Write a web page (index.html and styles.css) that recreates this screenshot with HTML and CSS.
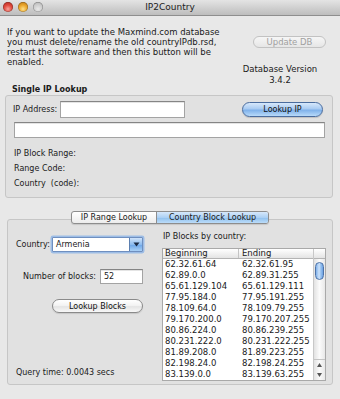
FILE: index.html
```html
<!DOCTYPE html>
<html>
<head>
<meta charset="utf-8">
<title>IP2Country</title>
<link rel="stylesheet" href="styles.css">
</head>
<body>
<div class="window">
  <div class="titlebar">
    <div class="lights"><span class="light red"></span><span class="light amber"></span><span class="light off"></span></div>
    <div class="title">IP2Country</div>
    <div></div>
  </div>

  <div class="top">
    <p class="info">If you want to update the Maxmind.com database<br>you must delete/rename the old countryIPdb.rsd,<br>restart the software and then this button will be<br>enabled.</p>
    <div class="dbcol">
      <div class="btn pill disabled updatedb">Update DB</div>
      <div class="dbver">Database Version</div>
      <div class="dbnum">3.4.2</div>
    </div>
  </div>

  <div class="group-title">Single IP Lookup</div>
  <div class="group">
    <div class="row1">
      <span class="ipl">IP Address:</span>
      <div class="field ipfield"></div>
      <div class="btn pill blue lookupip">Lookup IP</div>
    </div>
    <div class="field widefield"></div>
    <div class="infolines">
      <div>IP Block Range:</div>
      <div>Range Code:</div>
      <div>Country&nbsp; (code):</div>
    </div>
  </div>

  <div class="tabs">
    <div class="seg"><span class="segitem first">IP Range Lookup</span><span class="segitem sel">Country Block Lookup</span></div>
  </div>
  <div class="tabbox">
    <div class="leftcol">
      <div class="countryrow">
        <span class="countrylbl">Country:</span>
        <div class="popup"><span class="popval">Armenia</span><span class="poparrow"><svg width="7" height="5" viewBox="0 0 7 5"><path d="M0.5 0.5 L6.5 0.5 L3.5 4.5 Z" fill="#1b2a44"/></svg></span></div>
      </div>
      <div class="numrow">
        <span class="numlbl">Number of blocks:</span>
        <div class="field numfield">52</div>
      </div>
      <div class="btn pill white lookupblocks">Lookup Blocks</div>
      <div class="query">Query time: 0.0043 secs</div>
    </div>
    <div class="rightcol">
      <div class="caption">IP Blocks by country:</div>
      <div class="table">
        <div class="tmain">
          <div class="thead"><span class="c1">Beginning</span><span class="c2">Ending</span></div>
          <div class="trow"><span class="c1">62.32.61.64</span><span class="c2">62.32.61.95</span></div>
          <div class="trow"><span class="c1">62.89.0.0</span><span class="c2">62.89.31.255</span></div>
          <div class="trow"><span class="c1">65.61.129.104</span><span class="c2">65.61.129.111</span></div>
          <div class="trow"><span class="c1">77.95.184.0</span><span class="c2">77.95.191.255</span></div>
          <div class="trow"><span class="c1">78.109.64.0</span><span class="c2">78.109.79.255</span></div>
          <div class="trow"><span class="c1">79.170.200.0</span><span class="c2">79.170.207.255</span></div>
          <div class="trow"><span class="c1">80.86.224.0</span><span class="c2">80.86.239.255</span></div>
          <div class="trow"><span class="c1">80.231.222.0</span><span class="c2">80.231.222.255</span></div>
          <div class="trow"><span class="c1">81.89.208.0</span><span class="c2">81.89.223.255</span></div>
          <div class="trow"><span class="c1">82.198.24.0</span><span class="c2">82.198.24.255</span></div>
          <div class="trow"><span class="c1">83.139.0.0</span><span class="c2">83.139.63.255</span></div>
        </div>
        <div class="scroll">
          <div class="scorner"></div>
          <div class="strack">
            <div class="thumb"></div>
            <div class="arrows">
              <span class="arr"><svg width="5" height="4" viewBox="0 0 5 4"><path d="M2.5 0 L5 4 L0 4 Z" fill="#555"/></svg></span>
              <span class="arr"><svg width="5" height="4" viewBox="0 0 5 4"><path d="M0 0 L5 0 L2.5 4 Z" fill="#555"/></svg></span>
            </div>
          </div>
        </div>
      </div>
    </div>
  </div>
</div>
</body>
</html>
```

FILE: styles.css
```css
* { box-sizing: border-box; }

body {
  margin: 0;
  background: #e8e8e8;
  font-family: "DejaVu Sans", "Noto Sans", sans-serif;
  font-size: 8px;
  color: #1a1a1a;
}

.window {
  width: 340px;
  height: 399px;
  background: #e8e8e8;
  overflow: hidden;
}

/* title bar */
.titlebar {
  height: 16px;
  display: grid;
  grid-template-columns: 1fr auto 1fr;
  background: linear-gradient(#e4e4e4, #bdbdbd);
  border-bottom: 1px solid #8e8e8e;
}
.lights {
  display: flex;
  gap: 5px;
  padding: 2px 0 0 3px;
}
.light {
  width: 10px;
  height: 10px;
  border-radius: 50%;
  box-shadow: inset 0 0 0 0.5px rgba(0,0,0,0.35);
}
.light.red { background: radial-gradient(circle at 50% 70%, #f8a39b 0%, #e04a3d 45%, #a8221a 100%); }
.light.amber { background: radial-gradient(circle at 50% 70%, #fde08a 0%, #eba72d 45%, #b26d10 100%); }
.light.off { background: radial-gradient(circle at 50% 70%, #e8e8e8 0%, #cdcdcd 50%, #a9a9a9 100%); }
.title {
  font-size: 9px;
  line-height: 15px;
  color: #222;
}

/* top section */
.top {
  display: flex;
  padding: 11px 0 0 7px;
  font-size: 8.5px;
}
.info {
  margin: 0;
  line-height: 10px;
  white-space: nowrap;
}
.dbcol {
  margin-left: auto;
  margin-right: 14px;
  width: 92px;
  display: flex;
  flex-direction: column;
  text-align: center;
}
.dbver { margin-top: 16px; line-height: 10px; }
.dbnum { margin-top: 1px; line-height: 10px; }

/* buttons */
.btn {
  display: flex;
  align-items: center;
  justify-content: center;
  white-space: nowrap;
}
.pill { border-radius: 8px; }
.disabled {
  border: 1px solid #c2c2c2;
  background: linear-gradient(#f6f6f6, #e6e6e6);
  color: #a0a0a0;
}
.updatedb {
  align-self: flex-end;
  margin-top: 9px;
  width: 73px;
  height: 12px;
}
.blue {
  border: 1px solid #4a6c9e;
  background: linear-gradient(#d7e8fb 0%, #a9cbf2 45%, #7fb1ea 55%, #b8daf9 100%);
  color: #111;
  box-shadow: 0 1px 1px rgba(0,0,0,0.15);
}
.white {
  border: 1px solid #8a8a8a;
  background: linear-gradient(#ffffff 0%, #f3f3f3 45%, #e4e4e4 55%, #f8f8f8 100%);
  color: #111;
  box-shadow: 0 1px 1px rgba(0,0,0,0.12);
}

/* fields */
.field {
  background: #fff;
  border: 1px solid #a3a3a3;
  border-top-color: #858585;
  box-shadow: inset 0 1px 0 #e4e4e4;
}

/* group box */
.group-title {
  padding-left: 12px;
  line-height: 10px;
  font-weight: bold;
}
.group {
  margin: 0 7px 0 5px;
  height: 103px;
  border: 1px solid #c6c6c6;
  border-radius: 3px;
  background: #e1e1e1;
}
.row1 {
  display: flex;
  align-items: center;
  margin-top: 5px;
  height: 17px;
  padding-left: 7px;
}
.ipl { width: 47px; white-space: nowrap; }
.ipfield { width: 125px; height: 17px; }
.lookupip {
  margin-left: auto;
  margin-right: 9px;
  width: 81px;
  height: 15px;
}
.widefield {
  margin: 4px 7px 0 8px;
  height: 16px;
}
.infolines {
  padding: 8px 0 0 8px;
  line-height: 15px;
}

/* segmented control */
.tabs {
  margin-top: 13px;
  height: 13px;
  display: flex;
  justify-content: center;
  position: relative;
  z-index: 1;
}
.seg {
  display: flex;
  height: 13px;
  border: 1px solid #8d8d8d;
  border-radius: 3px;
  overflow: hidden;
  background: linear-gradient(#ffffff, #ececec);
  box-shadow: 0 1px 1px rgba(0,0,0,0.12);
}
.segitem {
  line-height: 11px;
  text-align: center;
  white-space: nowrap;
}
.segitem.first { width: 85px; border-right: 1px solid #8d8d8d; }
.segitem.sel {
  width: 111px;
  background: linear-gradient(#d6e8fb 0%, #acd0f4 50%, #8ec0ef 51%, #bcdcf8 100%);
}

/* tab box */
.tabbox {
  margin: -5px 7px 0 7px;
  height: 166px;
  border: 1px solid #c6c6c6;
  border-radius: 3px;
  background: #e1e1e1;
  display: flex;
}
.leftcol {
  width: 154px;
  padding-left: 8px;
  display: flex;
  flex-direction: column;
}
.countryrow {
  margin-top: 17px;
  height: 15px;
  display: flex;
  align-items: center;
}
.countrylbl { width: 36px; white-space: nowrap; }
.popup {
  width: 91px;
  height: 15px;
  display: flex;
  background: #fff;
  border: 1px solid #6f8fbf;
  box-shadow: 0 0 0 1.5px #9dbde6;
  border-radius: 1px;
}
.popval { flex: 1; padding-left: 3px; line-height: 13px; }
.poparrow {
  width: 13px;
  display: flex;
  align-items: center;
  justify-content: center;
  background: linear-gradient(#cfe3fa 0%, #8dbcef 50%, #6aa5e8 51%, #a9d0f6 100%);
  border-left: 1px solid #5b7fb0;
}
.numrow {
  margin-top: 17px;
  height: 15px;
  display: flex;
  align-items: center;
  padding-left: 7px;
}
.numlbl { width: 77px; white-space: nowrap; }
.numfield {
  width: 43px;
  height: 15px;
  line-height: 13px;
  padding-left: 3px;
}
.lookupblocks {
  margin: 15px 0 0 36px;
  width: 91px;
  height: 14px;
}
.query {
  margin-top: auto;
  margin-bottom: 6px;
  line-height: 10px;
}

.rightcol {
  width: 164px;
  display: flex;
  flex-direction: column;
}
.caption {
  margin-top: 12px;
  padding-left: 1px;
  line-height: 10px;
}
.table {
  margin-top: 6px;
  display: flex;
  border: 1px solid #a9a9a9;
  background: #fff;
  font-size: 8.5px;
}
.tmain { width: 151px; }
.thead {
  height: 10px;
  display: grid;
  grid-template-columns: 76px 1fr;
  background: linear-gradient(#ffffff, #e4e4e4);
  border-bottom: 1px solid #b4b4b4;
  line-height: 9px;
}
.thead .c1 { padding-left: 2px; border-right: 1px solid #c4c4c4; }
.thead .c2 { padding-left: 3px; }
.trow {
  display: grid;
  grid-template-columns: 76px 1fr;
  line-height: 11px;
  white-space: nowrap;
}
.trow .c1 { padding-left: 2px; }
.trow .c2 { padding-left: 3px; }

.scroll {
  width: 12px;
  border-left: 1px solid #c8c8c8;
  display: flex;
  flex-direction: column;
}
.scorner {
  height: 10px;
  background: linear-gradient(#ffffff, #e4e4e4);
  border-bottom: 1px solid #b4b4b4;
}
.strack {
  flex: 1;
  display: flex;
  flex-direction: column;
  background: linear-gradient(to right, #e2e2e2, #fbfbfb 50%, #e8e8e8);
}
.thumb {
  margin: 3px 0 0 1px;
  width: 9px;
  height: 18px;
  border-radius: 5px;
  border: 1px solid #4e73a8;
  background: linear-gradient(to right, #7fb0ea, #cfe4fb 45%, #a7ccf3 60%, #6aa0e2);
}
.arrows {
  margin-top: auto;
  display: flex;
  flex-direction: column;
  border-top: 1px solid #c4c4c4;
}
.arr {
  height: 10px;
  display: flex;
  align-items: center;
  justify-content: center;
}
```
